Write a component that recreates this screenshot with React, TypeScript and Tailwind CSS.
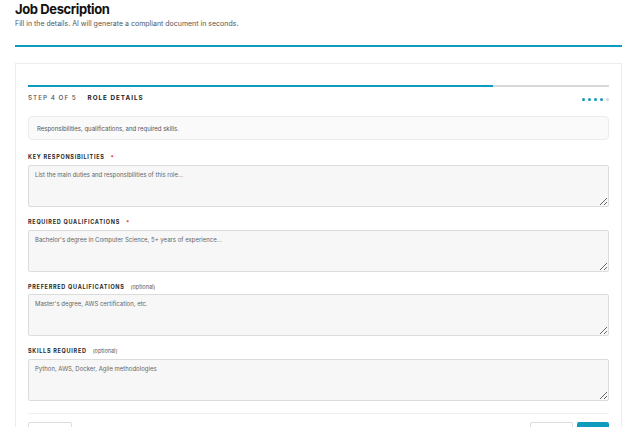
import React from "react";

const font = { fontFamily: "Inter, 'Noto Sans', sans-serif" };

type FieldProps = {
  label: string;
  required?: boolean;
  placeholder: string;
  first?: boolean;
};

function Field({ label, required, placeholder, first }: FieldProps) {
  return (
    <div className={first ? "mt-[14px] flex flex-col" : "mt-[11.7px] flex flex-col"}>
      <div className="flex h-[7px] items-center gap-[6px]">
        <span className="text-[5.5px] font-bold uppercase tracking-[0.13em] text-[#2a2a2a]">
          {label}
        </span>
        {required ? (
          <span className="text-[6px] font-bold text-[#e04848]">*</span>
        ) : (
          <span className="text-[5.5px] text-[#555]">(optional)</span>
        )}
      </div>
      <textarea
        placeholder={placeholder}
        className="mt-[4px] h-[42px] w-full resize-y rounded-[2px] border border-[#dcdcdc] bg-[#f7f7f7] px-[6px] py-[4px] text-[6px] leading-[9px] text-[#333] outline-none placeholder:text-[#666]"
      />
    </div>
  );
}

export default function App() {
  return (
    <div className="min-h-screen bg-white pl-[15px] pr-[2px]" style={font}>
      <h1 className="text-[13px] font-bold leading-[19px] tracking-[-0.03em] text-[#111]">
        Job Description
      </h1>
      <p className="text-[7px] leading-[9px] text-[#555]">
        Fill in the details. AI will generate a compliant document in seconds.
      </p>
      <div className="mt-[17px] h-[2px] bg-[#0e9bbd]" />

      <div className="mt-[16px] border border-[#ededed] bg-white px-[12px] pt-[21px]">
        {/* progress */}
        <div className="flex h-[2px] w-full bg-[#d8d8d8]">
          <div className="h-full w-[80%] bg-[#0e9bbd]" />
        </div>

        <div className="mt-[6px] flex h-[12px] items-center justify-between">
          <div className="flex items-center gap-[4px] text-[6.3px] uppercase tracking-[0.16em]">
            <span className="font-medium text-[#555]">Step 4 of 5</span>
            <span className="text-[#ccc]">·</span>
            <span className="font-bold text-[#222]">Role Details</span>
          </div>
          <div className="flex items-center gap-[3px]">
            <span className="h-[3px] w-[3px] rounded-full bg-[#0e9bbd]" />
            <span className="h-[3px] w-[3px] rounded-full bg-[#0e9bbd]" />
            <span className="h-[3px] w-[3px] rounded-full bg-[#0e9bbd]" />
            <span className="h-[3px] w-[3px] rounded-full bg-[#0e9bbd]" />
            <span className="h-[3px] w-[3px] rounded-full bg-[#d6d6d6]" />
          </div>
        </div>

        <div className="mt-[11px] flex h-[24px] items-center rounded-[4px] border border-[#ececec] bg-[#fafafa] px-[8px] text-[6px] text-[#555]">
          Responsibilities, qualifications, and required skills.
        </div>

        <Field
          first
          label="Key Responsibilities"
          required
          placeholder="List the main duties and responsibilities of this role..."
        />
        <Field
          label="Required Qualifications"
          required
          placeholder="Bachelor's degree in Computer Science, 5+ years of experience..."
        />
        <Field
          label="Preferred Qualifications"
          placeholder="Master's degree, AWS certification, etc."
        />
        <Field
          label="Skills Required"
          placeholder="Python, AWS, Docker, Agile methodologies"
        />

        <div className="mt-[12px] h-px bg-[#efefef]" />

        <div className="flex items-start justify-between pb-[14px] pt-[8px]">
          <button className="h-[24px] w-[44px] rounded-[2px] border border-[#dcdcdc] bg-white text-[6px] text-[#333]">
            Back
          </button>
          <div className="flex gap-[4px]">
            <button className="h-[24px] w-[43px] rounded-[2px] border border-[#dcdcdc] bg-white text-[6px] text-[#333]">
              Save Draft
            </button>
            <button className="h-[24px] w-[32px] rounded-[2px] bg-[#0e9bbd] text-[6px] text-white">
              Next
            </button>
          </div>
        </div>
      </div>
    </div>
  );
}
